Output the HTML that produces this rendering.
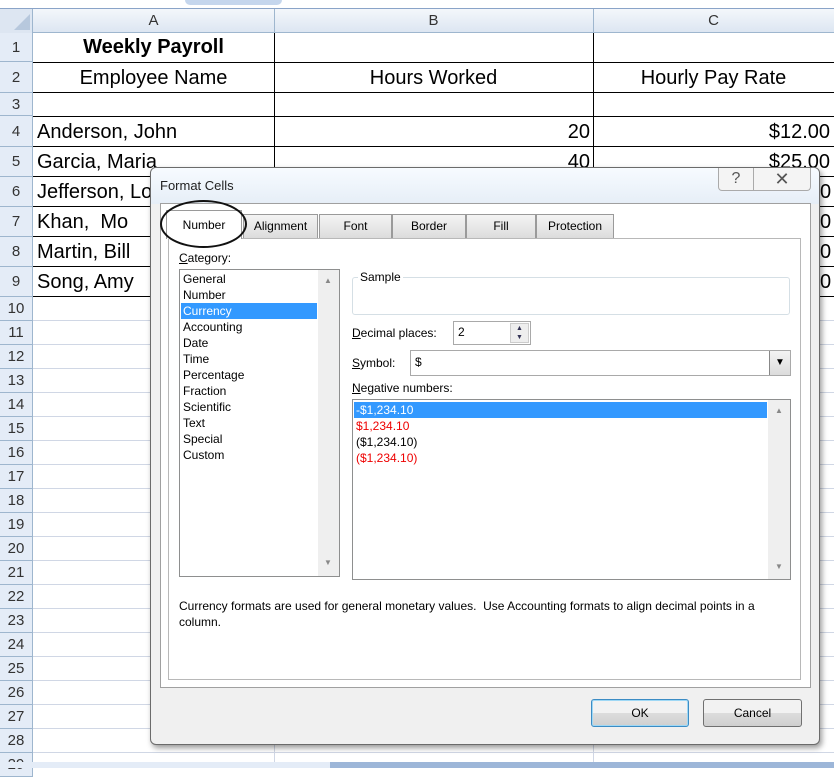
<!DOCTYPE html>
<html><head><meta charset="utf-8"><style>
*{margin:0;padding:0;box-sizing:border-box}
body{width:834px;height:768px;overflow:hidden;background:#fff;font-family:"Liberation Sans",sans-serif;position:relative}
.a{position:absolute}
.rh{position:absolute;left:0;width:33px;background:#e4ecf7;border-bottom:1px solid #9eb6ce;border-right:1px solid #9eb6ce;color:#333;font-size:15px;text-align:center}
.hl{position:absolute;left:33px;right:0;height:1px;background:#d0d7e5}
.bl{position:absolute;left:33px;right:0;height:1px;background:#000}
.ct{position:absolute;font-size:20px;color:#000;white-space:nowrap}
.d{font-size:12px;color:#000}
.tab{position:absolute;top:214px;height:24px;background:linear-gradient(#f4f4f4,#dcdcdc);border:1px solid #9a9a9a;border-bottom:none;font-size:12px;text-align:center;line-height:22px}
.li{position:absolute;left:183px;font-size:12px;line-height:16px}
.btn{position:absolute;top:699px;height:28px;border:1px solid #707070;border-radius:3px;background:linear-gradient(#f2f2f2 50%,#dddddd 50%,#cfcfcf);font-size:12px;text-align:center;line-height:26px}
</style></head><body>
<!-- top strip -->
<div class="a" style="left:0;top:0;width:834px;height:9px;background:#fff;border-bottom:1px solid #8aa4c8"></div>
<div class="a" style="left:185px;top:0;width:97px;height:5px;background:#c5d6ed;border-radius:0 0 6px 6px"></div>
<!-- column headers -->
<div class="a" style="left:0;top:9px;width:834px;height:24px;background:linear-gradient(#f4f7fb,#dde6f2);border-bottom:1px solid #9eb6ce"></div>
<div class="a" style="left:0;top:9px;width:33px;height:24px;border-right:1px solid #9eb6ce;background:#dde6f2"></div>
<svg class="a" style="left:14px;top:14px" width="16" height="16"><polygon points="16,0 16,16 0,16" fill="#b7c8dd"/></svg>
<div class="a" style="left:274px;top:9px;width:1px;height:24px;background:#9eb6ce"></div>
<div class="a" style="left:593px;top:9px;width:1px;height:24px;background:#9eb6ce"></div>
<div class="a" style="left:33px;top:12px;width:241px;text-align:center;font-size:15px;color:#333">A</div>
<div class="a" style="left:274px;top:12px;width:319px;text-align:center;font-size:15px;color:#333">B</div>
<div class="a" style="left:593px;top:12px;width:241px;text-align:center;font-size:15px;color:#333">C</div>
<!-- row headers -->
<div class="rh" style="top:33px;height:29px;line-height:29px">1</div>
<div class="rh" style="top:62px;height:31px;line-height:31px">2</div>
<div class="rh" style="top:93px;height:23px;line-height:23px">3</div>
<div class="rh" style="top:116px;height:31px;line-height:31px">4</div>
<div class="rh" style="top:147px;height:30px;line-height:30px">5</div>
<div class="rh" style="top:177px;height:30px;line-height:30px">6</div>
<div class="rh" style="top:207px;height:30px;line-height:30px">7</div>
<div class="rh" style="top:237px;height:30px;line-height:30px">8</div>
<div class="rh" style="top:267px;height:30px;line-height:30px">9</div>
<div class="rh" style="top:297px;height:24px;line-height:24px">10</div>
<div class="rh" style="top:321px;height:24px;line-height:24px">11</div>
<div class="rh" style="top:345px;height:24px;line-height:24px">12</div>
<div class="rh" style="top:369px;height:24px;line-height:24px">13</div>
<div class="rh" style="top:393px;height:24px;line-height:24px">14</div>
<div class="rh" style="top:417px;height:24px;line-height:24px">15</div>
<div class="rh" style="top:441px;height:24px;line-height:24px">16</div>
<div class="rh" style="top:465px;height:24px;line-height:24px">17</div>
<div class="rh" style="top:489px;height:24px;line-height:24px">18</div>
<div class="rh" style="top:513px;height:24px;line-height:24px">19</div>
<div class="rh" style="top:537px;height:24px;line-height:24px">20</div>
<div class="rh" style="top:561px;height:24px;line-height:24px">21</div>
<div class="rh" style="top:585px;height:24px;line-height:24px">22</div>
<div class="rh" style="top:609px;height:24px;line-height:24px">23</div>
<div class="rh" style="top:633px;height:24px;line-height:24px">24</div>
<div class="rh" style="top:657px;height:24px;line-height:24px">25</div>
<div class="rh" style="top:681px;height:24px;line-height:24px">26</div>
<div class="rh" style="top:705px;height:24px;line-height:24px">27</div>
<div class="rh" style="top:729px;height:24px;line-height:24px">28</div>
<div class="rh" style="top:753px;height:24px;line-height:24px">29</div>
<!-- gridlines -->
<div class="a" style="left:274px;top:33px;width:1px;height:264px;background:#000"></div>
<div class="a" style="left:593px;top:33px;width:1px;height:264px;background:#000"></div>
<div class="a" style="left:274px;top:297px;width:1px;height:470px;background:#d0d7e5"></div>
<div class="a" style="left:593px;top:297px;width:1px;height:470px;background:#d0d7e5"></div>
<div class="bl" style="top:62px"></div><div class="bl" style="top:92px"></div><div class="bl" style="top:116px"></div>
<div class="bl" style="top:146px"></div><div class="bl" style="top:176px"></div><div class="bl" style="top:206px"></div>
<div class="bl" style="top:236px"></div><div class="bl" style="top:266px"></div><div class="bl" style="top:296px"></div>
<div class="hl" style="top:320px"></div><div class="hl" style="top:344px"></div><div class="hl" style="top:368px"></div>
<div class="hl" style="top:392px"></div><div class="hl" style="top:416px"></div><div class="hl" style="top:440px"></div>
<div class="hl" style="top:464px"></div><div class="hl" style="top:488px"></div><div class="hl" style="top:512px"></div>
<div class="hl" style="top:536px"></div><div class="hl" style="top:560px"></div><div class="hl" style="top:584px"></div>
<div class="hl" style="top:608px"></div><div class="hl" style="top:632px"></div><div class="hl" style="top:656px"></div>
<div class="hl" style="top:680px"></div><div class="hl" style="top:704px"></div><div class="hl" style="top:728px"></div>
<div class="hl" style="top:752px"></div>
<!-- cell text -->
<div class="ct" style="left:33px;width:241px;text-align:center;top:36px;font-weight:bold">Weekly Payroll</div>
<div class="ct" style="left:33px;width:241px;text-align:center;top:67px">Employee Name</div>
<div class="ct" style="left:274px;width:319px;text-align:center;top:67px">Hours Worked</div>
<div class="ct" style="left:593px;width:241px;text-align:center;top:67px">Hourly Pay Rate</div>
<div class="ct" style="left:37px;top:121px">Anderson, John</div>
<div class="ct" style="left:37px;top:151px">Garcia, Maria</div>
<div class="ct" style="left:37px;top:181px">Jefferson, Lo</div>
<div class="ct" style="left:37px;top:211px">Khan,&nbsp; Mo</div>
<div class="ct" style="left:37px;top:241px">Martin, Bill</div>
<div class="ct" style="left:37px;top:271px">Song, Amy</div>
<div class="ct" style="right:244px;top:121px">20</div>
<div class="ct" style="right:244px;top:151px">40</div>
<div class="ct" style="right:4px;top:121px">$12.00</div>
<div class="ct" style="right:4px;top:151px">$25.00</div>
<div class="ct" style="left:820px;top:181px">0</div>
<div class="ct" style="left:820px;top:211px">0</div>
<div class="ct" style="left:820px;top:241px">0</div>
<div class="ct" style="left:820px;top:271px">0</div>
<!-- sheet tabs -->
<div class="a" style="left:0;top:762px;width:834px;height:6px;background:#9db6d8"></div>
<div class="a" style="left:0;top:762px;width:330px;height:6px;background:#e4ecf7"></div>
<!-- dialog -->
<div class="a" style="left:150px;top:167px;width:670px;height:578px;background:#f0f0f0;border:1px solid #6b6b6b;border-radius:6px;box-shadow:2px 3px 6px rgba(0,0,0,.4)"></div>
<div class="a" style="left:151px;top:168px;width:668px;height:36px;background:linear-gradient(#f7fbff,#e6eef7);border-radius:5px 5px 0 0"></div>
<div class="a d" style="left:160px;top:178px;font-size:13px;color:#222">Format Cells</div>
<div class="a" style="left:718px;top:168px;width:36px;height:23px;border:1px solid #aaa;border-top:none;border-radius:0 0 0 4px;background:#f4f4f4;text-align:center;font-size:16px;color:#555;line-height:22px">?</div>
<div class="a" style="left:754px;top:168px;width:57px;height:23px;border:1px solid #aaa;border-top:none;border-left:none;border-radius:0 0 4px 0;background:#f4f4f4;text-align:center;font-size:18px;color:#555;line-height:22px">✕</div>
<div class="a" style="left:160px;top:203px;width:651px;height:485px;background:#fff;border:1px solid #a0a0a0"></div>
<div class="a" style="left:168px;top:238px;width:633px;height:442px;border:1px solid #b8b8b8;background:#fff"></div>
<div class="tab" style="left:243px;width:75px">Alignment</div>
<div class="tab" style="left:319px;width:73px">Font</div>
<div class="tab" style="left:392px;width:74px">Border</div>
<div class="tab" style="left:466px;width:70px">Fill</div>
<div class="tab" style="left:536px;width:78px">Protection</div>
<div class="tab" style="left:166px;top:210px;width:76px;height:29px;background:#fff;line-height:28px">Number</div>
<div class="a" style="left:160px;top:200px;width:87px;height:48px;border:2.5px solid #111;border-radius:50%"></div>
<div class="a d" style="left:179px;top:251px"><u>C</u>ategory:</div>
<div class="a" style="left:179px;top:269px;width:161px;height:308px;border:1px solid #8e8f8f;background:#fff"></div>
<div class="a" style="left:318px;top:270px;width:21px;height:306px;background:#efefef"></div>
<div class="a" style="left:324px;top:276px;font-size:8px;color:#888">▲</div>
<div class="a" style="left:324px;top:558px;font-size:8px;color:#888">▼</div>
<div class="a" style="left:181px;top:303px;width:136px;height:16px;background:#3399ff"></div>
<div class="li" style="top:271px">General</div>
<div class="li" style="top:287px">Number</div>
<div class="li" style="top:303px;color:#fff">Currency</div>
<div class="li" style="top:319px">Accounting</div>
<div class="li" style="top:335px">Date</div>
<div class="li" style="top:351px">Time</div>
<div class="li" style="top:367px">Percentage</div>
<div class="li" style="top:383px">Fraction</div>
<div class="li" style="top:399px">Scientific</div>
<div class="li" style="top:415px">Text</div>
<div class="li" style="top:431px">Special</div>
<div class="li" style="top:447px">Custom</div>
<div class="a" style="left:352px;top:277px;width:438px;height:38px;border:1px solid #d5dfe5;border-radius:3px"></div>
<div class="a d" style="left:358px;top:270px;background:#fff;padding:0 2px">Sample</div>
<div class="a d" style="left:352px;top:326px"><u>D</u>ecimal places:</div>
<div class="a" style="left:453px;top:321px;width:78px;height:24px;border:1px solid #a9a9a9;background:#fff"></div>
<div class="a d" style="left:458px;top:325px">2</div>
<div class="a" style="left:510px;top:323px;width:19px;height:20px;background:#eee;border:1px solid #ccc;font-size:7px;color:#335;text-align:center;line-height:9px">▲<br>▼</div>
<div class="a d" style="left:352px;top:356px"><u>S</u>ymbol:</div>
<div class="a" style="left:410px;top:350px;width:381px;height:26px;border:1px solid #a9a9a9;background:#fff"></div>
<div class="a d" style="left:415px;top:355px">$</div>
<div class="a" style="left:769px;top:351px;width:21px;height:24px;background:linear-gradient(#f4f4f4,#dcdcdc);border-left:1px solid #888;font-size:10px;text-align:center;line-height:24px">▼</div>
<div class="a d" style="left:352px;top:381px"><u>N</u>egative numbers:</div>
<div class="a" style="left:352px;top:399px;width:439px;height:181px;border:1px solid #8e8f8f;background:#fff"></div>
<div class="a" style="left:768px;top:400px;width:22px;height:179px;background:#efefef"></div>
<div class="a" style="left:775px;top:406px;font-size:8px;color:#888">▲</div>
<div class="a" style="left:775px;top:562px;font-size:8px;color:#888">▼</div>
<div class="a" style="left:354px;top:402px;width:413px;height:16px;background:#3399ff"></div>
<div class="a d" style="left:356px;top:403px;color:#fff">-$1,234.10</div>
<div class="a d" style="left:356px;top:419px;color:#e00">$1,234.10</div>
<div class="a d" style="left:356px;top:435px">($1,234.10)</div>
<div class="a d" style="left:356px;top:451px;color:#e00">($1,234.10)</div>
<div class="a d" style="left:179px;top:598px;width:620px;line-height:16px">Currency formats are used for general monetary values.&nbsp; Use Accounting formats to align decimal points in a column.</div>
<div class="btn" style="left:591px;width:98px;border-color:#3c8cc4;box-shadow:inset 0 0 0 1px #9fd8f5">OK</div>
<div class="btn" style="left:703px;width:99px">Cancel</div>
</body></html>
